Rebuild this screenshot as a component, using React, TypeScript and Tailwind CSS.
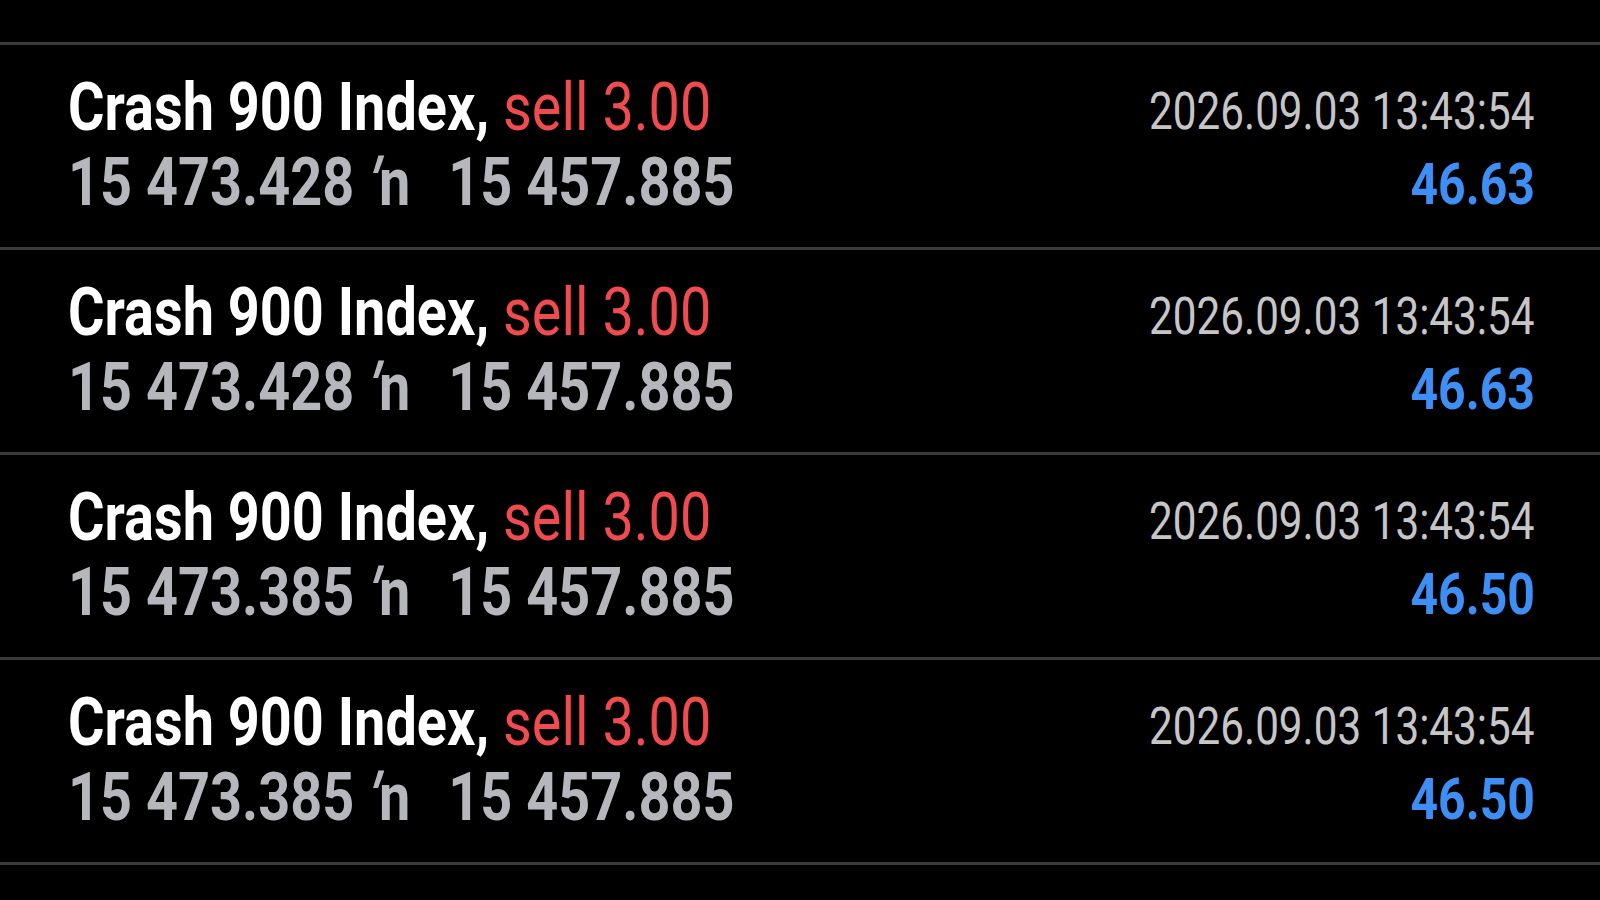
const deals = [
  { open: '15 473.428', close: '15 457.885', time: '2026.09.03 13:43:54', profit: '46.63' },
  { open: '15 473.428', close: '15 457.885', time: '2026.09.03 13:43:54', profit: '46.63' },
  { open: '15 473.385', close: '15 457.885', time: '2026.09.03 13:43:54', profit: '46.50' },
  { open: '15 473.385', close: '15 457.885', time: '2026.09.03 13:43:54', profit: '46.50' },
];

type Deal = (typeof deals)[number];

function DealRow({ deal }: { deal: Deal }) {
  return (
    <div className="flex h-[205px] justify-between border-t-[3px] border-[#3b3b3d] pl-[68px] pr-[65px]">
      <div className="origin-left scale-x-[0.846] whitespace-nowrap pt-[25px] font-bold">
        <div className="text-[66px] leading-[75px] text-white">
          Crash 900 Index, <span className="font-normal text-[#f04b4f]">sell 3.00</span>
        </div>
        <div className="text-[66px] leading-[75px] text-[#b5b7bc]">
          <span>{deal.open} </span>
          <span className="mr-[2px] inline-block -skew-x-20">′</span>
          <span>n</span>
          <span className="ml-[45px]">{deal.close}</span>
        </div>
      </div>
      <div className="flex flex-col items-end whitespace-nowrap pt-[29px]">
        <div className="origin-right scale-x-[0.828] text-[51px] font-normal leading-[75px] text-[#c6c6c8]">
          {deal.time}
        </div>
        <div className="origin-right scale-x-[0.83] text-[58px] font-bold leading-[70px] text-[#3d8ef5]">
          {deal.profit}
        </div>
      </div>
    </div>
  );
}

export default function App() {
  return (
    <div className="h-[900px] w-[1600px] overflow-hidden bg-black font-['Roboto',sans-serif]">
      <div className="h-[42px]" />
      {deals.map((deal, i) => (
        <DealRow key={i} deal={deal} />
      ))}
      <div className="border-t-[3px] border-[#3b3b3d]" />
    </div>
  );
}
